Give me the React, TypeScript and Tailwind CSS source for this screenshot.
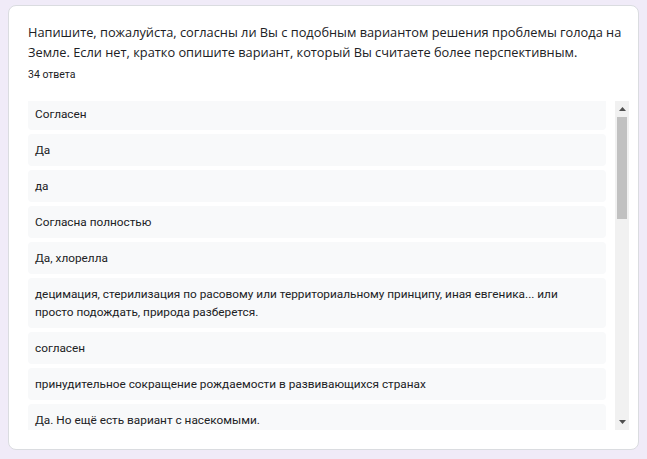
const answers: string[] = [
  "Согласен",
  "Да",
  "да",
  "Согласна полностью",
  "Да, хлорелла",
  "децимация, стерилизация по расовому или территориальному принципу, иная евгеника... или просто подождать, природа разберется.",
  "согласен",
  "принудительное сокращение рождаемости в развивающихся странах",
  "Да. Но ещё есть вариант с насекомыми.",
];

const App = () => {
  return (
    <div className="h-[459px] w-[647px] overflow-hidden bg-[#f0ebf8] px-2 pt-[5px]">
      <div className="h-[445px] w-[631px] rounded-lg border border-[#dadce0] bg-white pl-[19px] pr-[9px] pt-[16px]">
        <div className="font-['Open_Sans',sans-serif] text-[12.8px] leading-[20px] text-[#202124]">
          Напишите, пожалуйста, согласны ли Вы с подобным вариантом решения проблемы голода на Земле. Если нет, кратко опишите вариант, который Вы считаете более перспективным.
        </div>
        <div className="mt-[6px] font-['Roboto',sans-serif] text-[10.5px] leading-[14px] text-[#202124]">
          34 ответа
        </div>
        <div className="mt-[19px] flex h-[329px] gap-[9px]">
          <div className="flex-1 overflow-hidden">
            <div className="-mt-[3px] flex flex-col gap-1">
              {answers.map((a, i) => (
                <div
                  key={i}
                  className="rounded-[4px] bg-[#f8f9fa] px-[7px] py-[7px] font-['Roboto',sans-serif] text-[11.8px] leading-[18px] text-[#202124]"
                >
                  {a}
                </div>
              ))}
            </div>
          </div>
          {/* scrollbar */}
          <div className="flex w-[14px] flex-col bg-[#f1f1f1]">
            <div className="flex h-[16px] items-center justify-center">
              <svg width="7" height="4" viewBox="0 0 7 4">
                <path d="M3.5 0L7 4H0z" fill="#505050" />
              </svg>
            </div>
            <div className="mx-[2px] h-[102px] bg-[#c1c1c1]" />
            <div className="flex-1" />
            <div className="flex h-[16px] items-center justify-center">
              <svg width="7" height="4" viewBox="0 0 7 4">
                <path d="M0 0H7L3.5 4z" fill="#505050" />
              </svg>
            </div>
          </div>
        </div>
      </div>
    </div>
  );
};

export default App;
